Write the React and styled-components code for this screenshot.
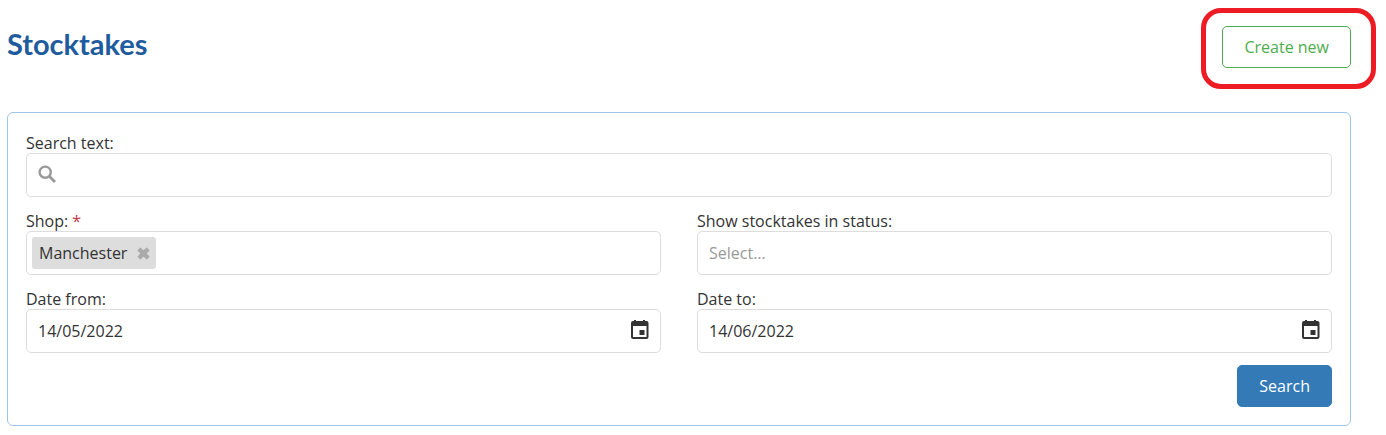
import { useState } from "react";
import styled, { createGlobalStyle } from "styled-components";

const GlobalStyle = createGlobalStyle`
  * {
    box-sizing: border-box;
  }

  body {
    margin: 0;
    background: #fff;
    color: #333;
    font-family: "Open Sans", "Noto Sans", sans-serif;
    font-size: 16px;
    line-height: 20px;
  }

  button, input, select {
    font: inherit;
    color: inherit;
  }
`;

const Page = styled.main`
  padding: 26px 35px 9px 7px;
`;

const Header = styled.header`
  display: flex;
  justify-content: space-between;
  align-items: flex-start;
  margin-bottom: 44px;
`;

const Title = styled.h1`
  margin: 0;
  color: #1f5c9e;
  font-family: Lato, sans-serif;
  font-size: 29px;
  font-weight: 700;
  line-height: 36px;
`;

const Highlight = styled.div`
  position: relative;

  &::after {
    content: "";
    position: absolute;
    inset: -18px -25px -21px -21px;
    border: 5px solid #ed1c24;
    border-radius: 20px;
    pointer-events: none;
  }
`;

const Button = styled.button`
  height: 42px;
  padding: 0 21px;
  border: 1px solid ${({ $primary }) => ($primary ? "#337ab7" : "#4cae4c")};
  border-radius: 5px;
  background: ${({ $primary }) => ($primary ? "#337ab7" : "#fff")};
  color: ${({ $primary }) => ($primary ? "#fff" : "#4cae4c")};
  cursor: pointer;
`;

const Panel = styled.form`
  padding: 20px 18px 18px;
  border: 1px solid #9fc5e8;
  border-radius: 6px;
`;

const Fields = styled.div`
  display: grid;
  grid-template-columns: 1fr 1fr;
  gap: 14px 36px;
`;

const Field = styled.div`
  grid-column: ${({ $wide }) => ($wide ? "1 / -1" : "auto")};
  min-width: 0;
`;

const Label = styled.label`
  display: block;
`;

const Required = styled.span`
  color: #c9374a;
`;

const Control = styled.div`
  display: flex;
  align-items: center;
  gap: 8px;
  height: 44px;
  padding: 0 ${({ $tags }) => ($tags ? "5px" : "11px")};
  border: 1px solid #ddd;
  border-radius: 5px;
  background: #fff;
`;

const Input = styled.input`
  flex: 1;
  min-width: 0;
  height: 40px;
  padding: 0;
  border: 0;
  outline: 0;
  background: transparent;
`;

const Select = styled.select`
  flex: 1;
  height: 40px;
  padding: 0;
  border: 0;
  outline: 0;
  appearance: none;
  background: transparent;
  color: ${({ value }) => (value ? "#333" : "#999")};
`;

const Tag = styled.span`
  display: flex;
  align-items: center;
  gap: 10px;
  height: 32px;
  padding: 0 6px 0 7px;
  border-radius: 3px;
  background: #ddd;
`;

const IconButton = styled.button`
  display: flex;
  padding: 0;
  border: 0;
  background: none;
  color: ${({ $muted }) => ($muted ? "#aaa" : "#333")};
  cursor: pointer;
`;

const Actions = styled.div`
  display: flex;
  justify-content: flex-end;
  margin-top: 12px;
`;

const SearchIcon = () => (
  <svg width="18" height="22" viewBox="0 0 18 22" fill="none" stroke="#999" aria-hidden="true">
    <circle cx="7.2" cy="8.2" r="5.6" strokeWidth="2.4" />
    <path d="m11.3 12.3 5.7 5.7" strokeWidth="2.8" />
  </svg>
);

const CrossIcon = () => (
  <svg width="13" height="13" viewBox="0 0 13 13" fill="currentColor" aria-hidden="true">
    <path
      d="M3.3 1.2 6.5 4.1 9.7 1.2l2.1 2.1-2.9 3.2 2.9 3.2-2.1 2.1-3.2-2.9-3.2 2.9-2.1-2.1 2.9-3.2-2.9-3.2Z"
      stroke="currentColor"
      strokeWidth="1.2"
      strokeLinejoin="round"
    />
  </svg>
);

const CalendarIcon = () => (
  <svg width="18" height="22" viewBox="0 0 18 22" fill="currentColor" aria-hidden="true">
    <path fillRule="evenodd" d="M3 0h2v1h7V0h2v1h1.5a2 2 0 0 1 2 2v14a2 2 0 0 1-2 2H2a2 2 0 0 1-2-2V3a2 2 0 0 1 2-2h1ZM2 6v11h13.5V6Z" />
    <path d="M8.5 10h5v5h-5z" />
  </svg>
);

const DateField = ({ id, label, initial }) => {
  const [value, setValue] = useState(initial);

  return (
    <Field>
      <Label htmlFor={id}>{label}</Label>
      <Control>
        <Input id={id} type="text" value={value} onChange={(e) => setValue(e.target.value)} />
        <IconButton type="button" aria-label="Open calendar">
          <CalendarIcon />
        </IconButton>
      </Control>
    </Field>
  );
};

const App = () => {
  const [shops, setShops] = useState(["Manchester"]);
  const [status, setStatus] = useState("");

  return (
    <>
      <GlobalStyle />
      <Page>
        <Header>
          <Title>Stocktakes</Title>
          <Highlight>
            <Button type="button">Create new</Button>
          </Highlight>
        </Header>
        <Panel onSubmit={(e) => e.preventDefault()}>
          <Fields>
            <Field $wide>
              <Label htmlFor="search">Search text:</Label>
              <Control>
                <SearchIcon />
                <Input id="search" type="text" />
              </Control>
            </Field>
            <Field>
              <Label htmlFor="shop">
                Shop: <Required>*</Required>
              </Label>
              <Control $tags>
                {shops.map((shop) => (
                  <Tag key={shop}>
                    {shop}
                    <IconButton
                      $muted
                      type="button"
                      aria-label={`Remove ${shop}`}
                      onClick={() => setShops(shops.filter((s) => s !== shop))}
                    >
                      <CrossIcon />
                    </IconButton>
                  </Tag>
                ))}
                <Input id="shop" type="text" />
              </Control>
            </Field>
            <Field>
              <Label htmlFor="status">Show stocktakes in status:</Label>
              <Control>
                <Select id="status" value={status} onChange={(e) => setStatus(e.target.value)}>
                  <option value="">Select...</option>
                </Select>
              </Control>
            </Field>
            <DateField id="from" label="Date from:" initial="14/05/2022" />
            <DateField id="to" label="Date to:" initial="14/06/2022" />
          </Fields>
          <Actions>
            <Button $primary type="submit">Search</Button>
          </Actions>
        </Panel>
      </Page>
    </>
  );
};

export default App;
